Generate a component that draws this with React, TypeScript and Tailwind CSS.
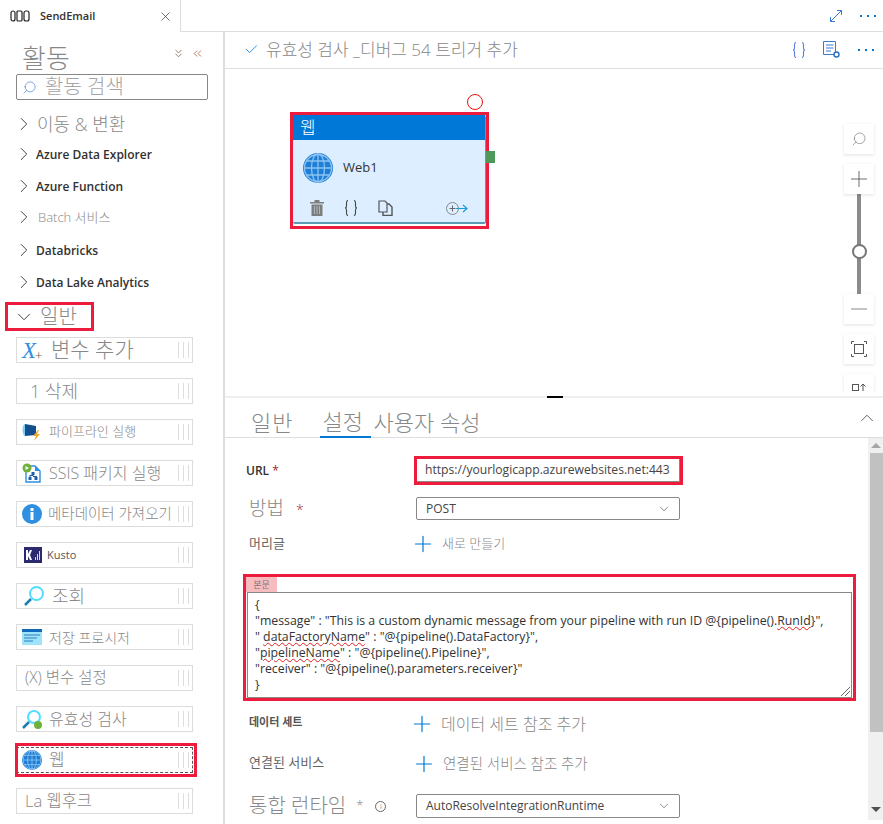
import { ChevronRight, ChevronDown, ChevronUp, ChevronsDown, ChevronsLeft, X, Search, Plus, Minus, Check } from "lucide-react";

const sans = "font-['Open_Sans','Noto_Sans_CJK_KR',sans-serif]";

const Grip = () => (
  <div className="ml-auto mr-[3px] flex h-[16px] shrink-0 gap-[4px]">
    <div className="w-px bg-[#dedede]" />
    <div className="w-px bg-[#dedede]" />
    <div className="w-px bg-[#dedede]" />
  </div>
);

const Globe = ({ size = 20 }: { size?: number }) => (
  <svg width={size} height={size} viewBox="0 0 30 30" className="shrink-0">
    <circle cx="15" cy="15" r="15" fill="#1f7fd6" />
    <g fill="none" stroke="#8cc4f2" strokeWidth="1.3">
      <circle cx="15" cy="15" r="13.5" />
      <ellipse cx="15" cy="15" rx="6.5" ry="14" />
      <path d="M15 1v28M1 15h28M3.5 8h23M3.5 22h23" />
    </g>
  </svg>
);

const Braces = ({ color, h = 16 }: { color: string; h?: number }) => (
  <svg width="14" height={h} viewBox="0 0 14 16" fill="none" stroke={color} strokeWidth="1.1" className="shrink-0">
    <path d="M4 .5C2.5.5 2.5 1.5 2.5 3v3c0 1-.5 2-1.5 2 1 0 1.5 1 1.5 2v3c0 1.500 0 2.500 1.500 2.500" />
    <path d="M10 .5c1.500 0 1.500 1 1.500 2.500v3c0 1 .5 2 1.500 2-1 0-1.500 1-1.500 2v3c0 1.500 0 2.500-1.500 2.500" />
  </svg>
);

const Dots = () => (
  <div className="flex gap-[5px]">
    <div className="h-[2px] w-[2px] bg-[#0078d4]" />
    <div className="h-[2px] w-[2px] bg-[#0078d4]" />
    <div className="h-[2px] w-[2px] bg-[#0078d4]" />
  </div>
);

const Section = ({ label, kind, mt }: { label: string; kind: "bold" | "big" | "small"; mt: string }) => (
  <div className={`flex h-[20px] items-center pl-[13px] ${mt}`}>
    <ChevronRight size={22} strokeWidth={1} className="shrink-0 text-[#333]" />
    {kind === "bold" && <span className="relative top-px ml-[1px] text-[12px] font-semibold text-[#323130]">{label}</span>}
    {kind === "big" && <span className="ml-[2px] text-[18px] font-light text-[#888]">{label}</span>}
    {kind === "small" && <span className="relative top-px ml-[3px] text-[13px] font-light text-[#888]">{label}</span>}
  </div>
);

const Item = ({
  icon,
  label,
  size,
  ml = "ml-[7px]",
  focus,
  color = "text-[#888] font-light",
}: {
  icon?: React.ReactNode;
  label: string;
  size: string;
  ml?: string;
  focus?: boolean;
  color?: string;
}) => (
  <div
    className={`relative mb-[15px] ml-[16px] flex h-[26px] w-[177px] items-center pl-[5px] ${color} ${size} ${
      focus ? "border border-dashed border-[#555]" : "border border-[#dcdcdc]"
    }`}
  >
    {focus && <div className="absolute -bottom-[5px] -left-[2px] -right-[5px] -top-[5px] border-[3px] border-[#ed1c3c]" />}
    {icon}
    <span className={`whitespace-nowrap ${ml}`}>{label}</span>
    <Grip />
  </div>
);

const Sidebar = () => (
  <div className="h-[792px] w-[225px] shrink-0 border-r-2 border-[#dedede]">
    <div className="flex h-[42px] items-start pl-[22px] pt-[10px]">
      <span className="text-[26px] font-light leading-[32px] text-[#888]">활동</span>
      <ChevronsDown size={13} strokeWidth={1.4} className="ml-auto mt-[5px] text-[#7a5a3a]" />
      <ChevronsLeft size={13} strokeWidth={1.4} className="ml-[6px] mr-[19px] mt-[5px] text-[#a8542a]" />
    </div>
    <div className="ml-[16px] flex h-[26px] w-[192px] items-center rounded-[2px] border border-[#8a8886] pl-[5px]">
      <Search size={15} strokeWidth={1} className="-scale-x-100 text-[#3c78d8]" />
      <span className="ml-[8px] text-[20px] font-light text-[#a5a5a5]">활동 검색</span>
    </div>
    <Section label="이동 & 변환" kind="big" mt="mt-[14px]" />
    <Section label="Azure Data Explorer" kind="bold" mt="mt-[10px]" />
    <Section label="Azure Function" kind="bold" mt="mt-[12px]" />
    <Section label="Batch 서비스" kind="small" mt="mt-[11px]" />
    <Section label="Databricks" kind="bold" mt="mt-[13px]" />
    <Section label="Data Lake Analytics" kind="bold" mt="mt-[12px]" />
    <div className="mb-[6px] ml-[5px] mt-[10px] flex h-[29px] w-[89px] items-center border-[3px] border-[#ed1c3c] pl-[5px]">
      <ChevronDown size={22} strokeWidth={1} className="shrink-0 text-[#333]" />
      <span className="ml-[5px] text-[20px] font-light text-[#888]">일반</span>
    </div>
    <Item
      label="변수 추가"
      size="text-[21px]"
      ml="ml-[9px]"
      icon={
        <span className="flex w-[20px] items-end font-['Liberation_Serif',serif] text-[23px] italic leading-none text-[#2f8fe0]">
          X<span className="-ml-[1px] text-[13px] not-italic leading-none text-[#666]">+</span>
        </span>
      }
    />
    <Item label="1 삭제" size="text-[18px]" ml="ml-[8px]" />
    <Item
      label="파이프라인 실행"
      size="text-[13px]"
      icon={
        <svg width="20" height="20" viewBox="0 0 20 20" className="shrink-0">
          <ellipse cx="3" cy="8" rx="2.500" ry="6" fill="#7fd0f0" />
          <path d="M3 2l11 2v9L3 14z" fill="#134f8e" />
          <path d="M16 8l-5 6h3l-2 5 6-7h-3l2-4z" fill="#f5a623" />
        </svg>
      }
    />
    <Item
      label="SSIS 패키지 실행"
      size="text-[16px]"
      icon={
        <svg width="20" height="20" viewBox="0 0 20 20" className="shrink-0">
          <path d="M4 3h9l5 5v11H4z" fill="#fff" stroke="#2f8fe0" strokeWidth="1.400" />
          <path d="M13 3v5h5z" fill="#2f8fe0" />
          <circle cx="5" cy="5" r="4.500" fill="#6fb23a" />
          <path d="M3.500 3l3.500 2-3.500 2z" fill="#fff" />
          <path d="M9.500 9h3v3h-3zM6.500 14h3v3h-3zM12.500 14h3v3h-3zM10.500 12h1v1h-3v1h-1v-2zM11 13h4v1h-4z" fill="#1a5fa8" />
        </svg>
      }
    />
    <Item
      label="메타데이터 가져오기"
      size="text-[14.500px]"
      ml="ml-[6px]"
      icon={
        <svg width="20" height="20" viewBox="0 0 20 20" className="shrink-0">
          <circle cx="10" cy="10" r="10" fill="#2f8fe0" />
          <rect x="8.500" y="8" width="3" height="8" fill="#fff" />
          <rect x="8.500" y="4" width="3" height="3" fill="#fff" />
        </svg>
      }
    />
    <Item
      label="Kusto"
      size="text-[11px]"
      ml="ml-[5px]"
      color="text-[#555]"
      icon={
        <svg width="18" height="16" viewBox="0 0 18 16" className="ml-[2px] shrink-0">
          <rect width="18" height="16" fill="#2b2a6e" />
          <path d="M2 3h2v4l2-4h2L6 8l2 5H6L4 9v4H2z" fill="#fff" />
          <path d="M11 10h1v3h-1zM13 7h1v6h-1zM15 4h1v9h-1z" fill="#d9d9ee" />
        </svg>
      }
    />
    <Item
      label="조회"
      size="text-[18px]"
      ml="ml-[7px]"
      icon={
        <svg width="22" height="22" viewBox="0 0 22 22" className="ml-[1px] shrink-0">
          <circle cx="13.500" cy="8.500" r="6.500" fill="#fff" stroke="#50e0ff" strokeWidth="2" />
          <path d="M8 14l-6 6" stroke="#1a7fb0" strokeWidth="2.500" />
        </svg>
      }
    />
    <Item
      label="저장 프로시저"
      size="text-[14px]"
      icon={
        <svg width="20" height="16" viewBox="0 0 20 16" className="shrink-0">
          <rect width="20" height="16" fill="#9fe3f8" />
          <rect width="20" height="3" fill="#0f6cbd" />
          <path d="M2 6h16M2 9h13M2 12h9" stroke="#2f7fc8" strokeWidth="1.200" />
        </svg>
      }
    />
    <Item label="(X) 변수 설정" size="text-[15.500px]" ml="ml-[3px]" />
    <Item
      label="유효성 검사"
      size="text-[16px]"
      icon={
        <svg width="20" height="20" viewBox="0 0 20 20" className="shrink-0">
          <circle cx="12" cy="8" r="6" fill="#fff" stroke="#50e0ff" strokeWidth="2" />
          <path d="M7 13l-6 6" stroke="#1a7fb0" strokeWidth="2.500" />
          <circle cx="16" cy="16" r="4" fill="#6fb23a" />
        </svg>
      }
    />
    <Item label="웹" size="text-[17px]" icon={<Globe />} focus />
    <Item label="La 웹후크" size="text-[16.500px]" ml="ml-[3px]" />
  </div>
);

const NodeCard = () => (
  <div className="absolute left-[65px] top-[43px] h-[117px] w-[199px] border-[3px] border-[#ed1c3c]">
    <div className="flex h-[109px] flex-col rounded-[2px] border-b-2 border-r border-[#5a9ab5] bg-[#dceeff]">
      <div className="flex h-[25px] shrink-0 items-center bg-[#0078d7] pl-[7px] text-[17px] font-light text-white">웹</div>
      <div className="flex items-center pl-[10px] pt-[13px]">
        <Globe size={30} />
        <span className="ml-[10px] text-[13px] text-[#333]">Web1</span>
      </div>
      <div className="mt-auto flex items-center pb-[6px] pl-[17px]">
        <svg width="14" height="16" viewBox="0 0 14 16" className="shrink-0">
          <path d="M0 2h14v1.500H0zM4.500 0h5v2h-5zM1.500 4.500h11V16h-11z" fill="#7d7d7d" />
          <path d="M4.500 6v8M7 6v8M9.500 6v8" stroke="#b8c4cc" strokeWidth="0.800" />
        </svg>
        <span className="ml-[20px]">
          <Braces color="#444" />
        </span>
        <svg width="15" height="16" viewBox="0 0 15 16" fill="none" stroke="#555" strokeWidth="1.200" className="ml-[20px] shrink-0">
          <path d="M1 1h6l2 2v9H1z" />
          <path d="M5 12v3.500h9V7l-3-3H9" strokeWidth="1.400" />
        </svg>
        <svg width="22" height="13" viewBox="0 0 22 13" fill="none" className="ml-[53px] shrink-0">
          <circle cx="6.500" cy="6.500" r="6" stroke="#888" />
          <path d="M3.500 6.500h6M6.500 3.500v6" stroke="#666" />
          <path d="M10 6.500h11M17 3l4 3.500L17 10" stroke="#1e9bd7" strokeWidth="1.200" />
        </svg>
      </div>
    </div>
  </div>
);

const ZoomBtn = ({ children, mb }: { children?: React.ReactNode; mb: string }) => (
  <div className={`flex h-[30px] w-[30px] shrink-0 items-center justify-center bg-white shadow-[0_1px_3px_rgba(0,0,0,0.12)] ${mb}`}>{children}</div>
);

const Canvas = () => (
  <div className="relative h-[327px] overflow-hidden">
    <NodeCard />
    <div className="absolute left-[242px] top-[25px] h-[16px] w-[16px] rounded-full border border-[#ee1111] bg-white" />
    <div className="absolute left-[261px] top-[82px] h-[12px] w-[9px] bg-[#4f9a5a]" />
    {/* zoom controls */}
    <div className="absolute left-[632px] top-[125px] h-[100px] w-[4px] bg-[#8a8a8a]" />
    <div className="absolute left-[627px] top-[175px] h-[15px] w-[15px] rounded-full border-2 border-[#777] bg-white" />
    <div className="absolute left-[617px] top-[53px] flex h-[270px] w-[34px] flex-col items-center overflow-hidden pt-[2px]">
      <ZoomBtn mb="mb-[10px]">
        <Search size={16} strokeWidth={1} className="-scale-x-100 text-[#777]" />
      </ZoomBtn>
      <ZoomBtn mb="mb-[100px]">
        <Plus size={26} strokeWidth={0.8} className="text-[#555]" />
      </ZoomBtn>
      <ZoomBtn mb="mb-[10px]">
        <Minus size={26} strokeWidth={0.8} className="text-[#777]" />
      </ZoomBtn>
      <ZoomBtn mb="mb-[10px]">
        <svg width="16" height="16" viewBox="0 0 16 16" fill="none" stroke="#555">
          <rect x="3.500" y="3.500" width="9" height="9" />
          <path d="M.5 3V.5H3M13 .5h2.500V3M15.500 13v2.500H13M3 15.500H.5V13" />
        </svg>
      </ZoomBtn>
      <ZoomBtn mb="mb-0">
        <svg width="16" height="18" viewBox="0 0 16 18" fill="none" stroke="#555" className="-mb-[6px]">
          <rect x="1.500" y="1.500" width="6" height="6" />
          <path d="M12 8V1M9.500 3.500L12 1l2.500 2.500" />
          <rect x="8.500" y="11.500" width="6" height="6" />
        </svg>
      </ZoomBtn>
    </div>
  </div>
);

const Line = ({ children }: { children: React.ReactNode }) => <div className="h-[16px] whitespace-nowrap leading-[16px]">{children}</div>;

const Squiggle = ({ children }: { children: React.ReactNode }) => (
  <span className="underline decoration-[#e02020] decoration-wavy decoration-1">{children}</span>
);

const AddLink = ({ label, size }: { label: string; size: string }) => (
  <div className="flex items-center">
    <Plus size={26} strokeWidth={1.100} className="shrink-0 text-[#0078d4]" />
    <span className={`ml-[6px] whitespace-nowrap font-light text-[#888] ${size}`}>{label}</span>
  </div>
);

const Properties = () => (
  <div className="relative h-[426px] overflow-hidden">
    <div className="flex h-[40px] items-end border-b border-[#dedede] pl-[26px] text-[22px] font-light leading-[30px] text-[#888]">
      <span className="tracking-[1px]">일반</span>
      <span className="relative top-px ml-[27px] w-[51px] border-b-2 border-[#0078d4] pl-[2px]">설정</span>
      <span className="ml-[2px]">사용자 속성</span>
      <ChevronUp size={22} strokeWidth={1} className="mb-[8px] ml-auto mr-[5px] text-[#555]" />
    </div>
    <div className="absolute bottom-[4px] right-0 top-[40px] w-[15px] bg-[#f0f0f0]">
      <div className="flex h-[15px] items-center justify-center">
        <div className="h-0 w-0 border-x-[5px] border-b-[5px] border-x-transparent border-b-[#a6a6a6]" />
      </div>
      <div className="ml-[2px] h-[279px] bg-[#c1c1c1]" />
      <div className="absolute bottom-[3px] left-0 flex h-[15px] w-full items-center justify-center">
        <div className="h-0 w-0 border-x-[5px] border-t-[5px] border-x-transparent border-t-[#505050]" />
      </div>
    </div>

    <div className="pl-[21px]">
      <div className="mt-[18px] flex h-[29px] items-center">
        <span className="w-[168px] text-[12px] font-semibold text-[#323130]">
          URL <span className="font-normal text-[#a4262c]">*</span>
        </span>
        <div className="h-[29px] w-[269px] border-[3px] border-[#ed1c3c]">
          <div className="flex h-[23px] items-center border-b border-r border-[#8a8886] pl-[8px] text-[12.150px] text-[#444]">
            https://yourlogicapp.azurewebsites.net:443
          </div>
        </div>
      </div>
      <div className="mt-[12px] flex h-[23px] items-center">
        <span className="w-[170px] pl-[3px] text-[19px] font-light text-[#888]">
          방법 <span className="ml-[7px] text-[14px] text-[#a4262c]">*</span>
        </span>
        <div className="flex h-[23px] w-[264px] items-center justify-between rounded-[2px] border border-[#8a8886] pl-[9px] pr-[8px] text-[12px] text-[#444]">
          POST
          <ChevronDown size={14} strokeWidth={1.200} className="text-[#555]" />
        </div>
      </div>
      <div className="mt-[8px] flex h-[32px] items-center">
        <span className="w-[164px] pl-[3px] text-[13px] text-[#666]">머리글</span>
        <AddLink label="새로 만들기" size="text-[13px]" />
      </div>
    </div>

    <div className="ml-[18px] mt-[14px] h-[127px] w-[613px] border-[3px] border-[#ed1c3c]">
      <div className="flex h-[15px] w-[31px] items-center justify-center bg-[#f7bcc0] text-[9px] leading-none text-[#777]">본문</div>
      <div className="relative mx-[1px] h-[106px] border border-[#8a8886] pl-[7px] pt-[4px] text-[12.300px] text-[#333]">
        <Line>{"{"}</Line>
        <Line>
          "message" : "This is a custom dynamic message from your pipeline with run ID @{"{"}pipeline().<Squiggle>RunId</Squiggle>
          {"}"}",
        </Line>
        <Line>
          " <Squiggle>dataFactoryName</Squiggle>" : "@{"{"}pipeline().DataFactory{"}"}",
        </Line>
        <Line>
          "<Squiggle>pipelineName</Squiggle>" : "@{"{"}pipeline().Pipeline{"}"}",
        </Line>
        <Line>"receiver" : "@{"{"}pipeline().parameters.receiver{"}"}"</Line>
        <Line>{"}"}</Line>
        <svg width="9" height="9" viewBox="0 0 9 9" stroke="#666" className="absolute bottom-px right-px">
          <path d="M0 9L9 0M4 9l5-5" />
        </svg>
      </div>
    </div>

    <div className="pl-[24px]">
      <div className="mt-[9px] flex h-[28px] items-center">
        <span className="w-[160px] pb-[4px] text-[11px] font-semibold text-[#555]">데이터 세트</span>
        <AddLink label="데이터 세트 참조 추가" size="text-[16px]" />
      </div>
      <div className="mt-[12px] flex h-[28px] items-center">
        <span className="w-[162px] pb-[2px] text-[13px] text-[#666]">연결된 서비스</span>
        <AddLink label="연결된 서비스 참조 추가" size="text-[14.500px]" />
      </div>
      <div className="mt-[16px] flex h-[24px] items-center">
        <span className="flex w-[167px] items-center whitespace-nowrap text-[20px] font-light text-[#888]">
          통합 런타임
          <span className="ml-[10px] text-[13px]">*</span>
          <span className="ml-[12px] flex h-[11px] w-[11px] items-center justify-center rounded-full border border-[#666] text-[8px] leading-none text-[#555]">i</span>
        </span>
        <div className="flex h-[24px] w-[264px] items-center justify-between rounded-[2px] border border-[#8a8886] pl-[9px] pr-[8px] text-[12px] text-[#444]">
          AutoResolveIntegrationRuntime
          <ChevronDown size={14} strokeWidth={1.200} className="text-[#555]" />
        </div>
      </div>
    </div>
  </div>
);

const Main = () => (
  <div className="min-w-0 flex-1">
    <div className="flex h-[37px] items-center border-b border-[#dedede] pb-[1px] pl-[19px] pr-[9px]">
      <Check size={15} strokeWidth={1.300} className="text-[#0078d4]" />
      <span className="ml-[7px] text-[17px] font-light text-[#888]">유효성 검사 _디버그 54 트리거 추가</span>
      <span className="ml-auto">
        <Braces color="#5a7fd8" />
      </span>
      <svg width="17" height="17" viewBox="0 0 17 17" fill="none" stroke="#3a78d8" className="ml-[17px] shrink-0">
        <path d="M.5 .5h12v13H.5zM3 4h7.500M3 7h7.500M3 10h5" />
        <circle cx="13.500" cy="13.500" r="2.500" fill="#fff" stroke="#2a6fc0" strokeWidth="1.400" />
      </svg>
      <div className="ml-[18px]">
        <Dots />
      </div>
    </div>
    <Canvas />
    <div className="relative h-[2px] bg-[#efefef]">
      <div className="absolute left-[322px] top-0 h-[2px] w-[16px] bg-black" />
    </div>
    <Properties />
  </div>
);

export default function App() {
  return (
    <div className={`h-[824px] w-[883px] overflow-hidden bg-white ${sans}`}>
      <div className="flex h-[32px]">
        <div className="flex w-[181px] items-center border-r border-[#dedede] pl-[10px]">
          <svg width="20" height="12" viewBox="0 0 20 12" fill="none" stroke="#222" strokeWidth="1.200">
            <rect x="1" y="1" width="4" height="10" rx="2" />
            <rect x="7" y="1" width="5" height="10" rx="1" />
            <rect x="14" y="1" width="5" height="10" rx="2" />
          </svg>
          <span className="ml-[10px] text-[11px] font-semibold text-[#323130]">SendEmail</span>
          <X size={15} strokeWidth={1.100} className="ml-auto mr-[7px] text-[#333]" />
        </div>
        <div className="flex flex-1 items-center justify-end border-b border-[#dedede] pr-[7px]">
          <svg width="12" height="12" viewBox="0 0 12 12" fill="none" stroke="#3a78d8" strokeWidth="1">
            <path d="M.5 11.500l11-11M7 .5h4.500V5M.5 7v4.500H5" />
          </svg>
          <div className="ml-[18px]">
            <Dots />
          </div>
        </div>
      </div>
      <div className="flex">
        <Sidebar />
        <Main />
      </div>
    </div>
  );
}
